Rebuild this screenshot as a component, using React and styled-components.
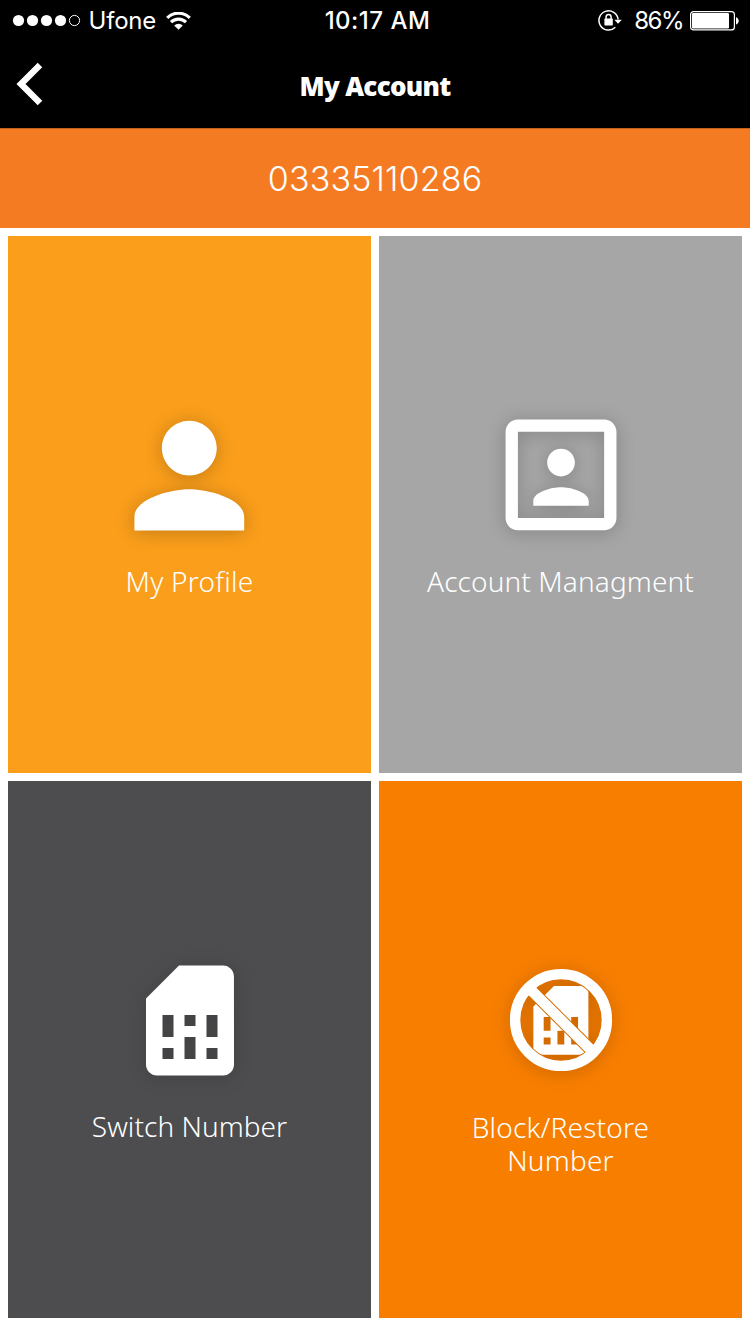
import React from "react";
import styled, { createGlobalStyle } from "styled-components";

const GlobalStyle = createGlobalStyle`
  *, *::before, *::after { box-sizing: border-box; }
  body { margin: 0; background: #fff; }
`;

const Screen = styled.main`
  width: 750px;
  height: 1334px;
  display: flex;
  flex-direction: column;
  background: #fff;
  color: #fff;
  overflow: hidden;
`;

const StatusBar = styled.div`
  height: 40px;
  flex: none;
  display: grid;
  grid-template-columns: 1fr auto 1fr;
  align-items: center;
  padding: 1px 10px 0 12px;
  background: #000;
  font-family: Inter, "Liberation Sans", sans-serif;
  font-size: 24px;
  line-height: 40px;
`;

const StatusGroup = styled.div`
  display: flex;
  align-items: center;
  justify-content: ${(p) => (p.$end ? "flex-end" : "flex-start")};
  height: 40px;
  svg { display: block; flex: none; }
`;

const StatusText = styled.span`
  font-weight: ${(p) => p.$weight || 400};
  letter-spacing: ${(p) => p.$tracking || 0}px;
  padding-left: ${(p) => p.$left || 0}px;
  padding-right: ${(p) => p.$right || 0}px;
  white-space: nowrap;
`;

const NavBar = styled.header`
  height: 88px;
  flex: none;
  display: grid;
  grid-template-columns: 60px 1fr 60px;
  align-items: start;
  background: #000;
`;

const BackButton = styled.button`
  border: 0;
  padding: 22px 0 0 15px;
  background: none;
  text-align: left;
  svg { display: block; }
`;

const Title = styled.h1`
  margin: 0;
  padding-top: 27px;
  text-align: center;
  font: 900 26px/38px "Noto Sans", sans-serif;
  letter-spacing: -0.7px;
`;

const NumberBanner = styled.div`
  height: 100px;
  flex: none;
  border-top: 1px solid #c4621b;
  background: #f57b22;
  text-align: center;
  font: 300 34px/99px Inter, "Liberation Sans", sans-serif;
  letter-spacing: 0.15px;
`;

const Grid = styled.section`
  flex: 1;
  display: grid;
  grid-template-columns: 1fr 1fr;
  grid-template-rows: 537px 537px;
  gap: 8px;
  padding: 8px;
`;

const Tile = styled.a`
  display: flex;
  flex-direction: column;
  align-items: center;
  padding-top: 173px;
  background: ${(p) => p.$color};
`;

const TileIcon = styled.svg`
  display: block;
  flex: none;
  width: 132px;
  height: 132px;
  overflow: visible;
  filter: drop-shadow(0 2px 9px rgba(0, 0, 0, ${(p) => p.$shade || 0.22}));
`;

const TileLabel = styled.span`
  margin-top: ${(p) => p.$top || 24}px;
  font: 300 28px/33px "Noto Sans", sans-serif;
  letter-spacing: ${(p) => p.$tracking || 0.12}px;
  text-align: center;
  white-space: pre-line;
`;

const SIM =
  "M19.99 4c0-1.1-.89-2-1.99-2h-8L4 8v12c0 1.1.9 2 2 2h12.01c1.1 0 1.99-.9 1.99-2l-.01-16zM9 19H7v-2h2v2zm8 0h-2v-2h2v2zm-8-4H7v-4h2v4zm4 4h-2v-4h2v4zm0-6h-2v-2h2v2zm4 2h-2v-4h2v4z";

function SignalDots() {
  return (
    <svg width="69" height="14" viewBox="0 0 69 14">
      {[6.5, 20.5, 34.5, 48.5].map((x) => (
        <circle key={x} cx={x} cy="6.5" r="5.6" fill="#fff" />
      ))}
      <circle cx="62.5" cy="6.5" r="5.1" fill="none" stroke="#fff" />
    </svg>
  );
}

function Wifi() {
  return (
    <svg width="25" height="18" viewBox="0 0 25 18" fill="none" stroke="#fff" strokeWidth="3.2">
      <path d="M1.2 5.8a16.2 16.2 0 0 1 22.6 0" />
      <path d="M5 10.1a10.7 10.7 0 0 1 15 0" />
      <path d="M12.5 17.8l-4.3-4.3a6 6 0 0 1 8.6 0z" fill="#fff" stroke="none" />
    </svg>
  );
}

function RotationLock() {
  return (
    <svg width="24" height="22" viewBox="0 0 24 22" fill="none" stroke="#fff">
      <path d="M17.3 17.3A9.6 9.6 0 1 1 20.1 9.5" strokeWidth="1.5" />
      <path d="M16.4 9.7h7.4L20 13.7z" fill="#fff" stroke="none" />
      <rect x="6.4" y="8.6" width="8.4" height="6.8" rx=".6" fill="#fff" stroke="none" />
      <path d="M8.1 9.5V7.1a2.5 2.7 0 0 1 5 0V9.5" strokeWidth="1.5" />
    </svg>
  );
}

function Battery() {
  return (
    <svg width="50" height="20" viewBox="0 0 50 20">
      <rect x=".6" y=".6" width="43.8" height="18.3" rx="3" fill="none" stroke="#fff" strokeWidth="1.2" />
      <rect x="2" y="2" width="37" height="15.5" rx="1.2" fill="#fff" />
      <path d="M46 6.2c3.6 1 3.6 6.2 0 7.2z" fill="#fff" />
    </svg>
  );
}

function BlockedSim() {
  return (
    <TileIcon viewBox="0 0 132 132" $shade={0.2}>
      <defs>
        <clipPath id="ring-inside">
          <circle cx="66" cy="66" r="39.8" />
        </clipPath>
        <mask id="slash-gap">
          <rect width="132" height="132" fill="#fff" />
          <path d="M28 28L104 104" stroke="#000" strokeWidth="12.6" />
        </mask>
      </defs>
      <g clipPath="url(#ring-inside)">
        <g mask="url(#slash-gap)">
          <path d={SIM} fill="#fff" transform="translate(24.6 25.1) scale(3.44)" />
        </g>
      </g>
      <circle cx="66" cy="66" r="45.9" fill="none" stroke="#fff" strokeWidth="10.4" />
      <path d="M34 34L98 98" stroke="#fff" strokeWidth="10.8" />
    </TileIcon>
  );
}

export default function App() {
  return (
    <Screen>
      <GlobalStyle />
      <StatusBar>
        <StatusGroup>
          <SignalDots />
          <StatusText $left={7.5} $right={9.8} $tracking={-0.2}>Ufone</StatusText>
          <Wifi />
        </StatusGroup>
        <StatusText $weight={500} $left={3} $tracking={0.5}>10:17 AM</StatusText>
        <StatusGroup $end>
          <RotationLock />
          <StatusText $left={12} $right={7} $tracking={-1.5}>86%</StatusText>
          <Battery />
        </StatusGroup>
      </StatusBar>
      <NavBar>
        <BackButton aria-label="Back">
          <svg width="30" height="44" viewBox="0 0 30 44">
            <path d="M25 3L6 22 25 41" fill="none" stroke="#fff" strokeWidth="6.4" />
          </svg>
        </BackButton>
        <Title>My Account</Title>
      </NavBar>
      <NumberBanner>03335110286</NumberBanner>
      <Grid>
        <Tile $color="#fa9e1b">
          <TileIcon viewBox="0 0 132 132" fill="#fff">
            <path
              transform="translate(-17 -15.8) scale(6.86)"
              d="M12 12c2.21 0 4-1.79 4-4s-1.79-4-4-4-4 1.79-4 4 1.79 4 4 4zm0 2c-2.67 0-8 1.34-8 4v2h16v-2c0-2.66-5.33-4-8-4z"
            />
          </TileIcon>
          <TileLabel $tracking={0.25}>My Profile</TileLabel>
        </Tile>
        <Tile $color="#a6a6a6">
          <TileIcon viewBox="0 0 132 132" fill="#fff">
            <path
              transform="translate(-7.9 -8) scale(6.16)"
              d="M12 12.25c1.24 0 2.25-1.01 2.25-2.25S13.24 7.75 12 7.75 9.75 8.76 9.75 10s1.01 2.25 2.25 2.25zm4.5 4c0-1.5-3-2.25-4.5-2.25s-4.5.75-4.5 2.25V17h9v-.75zM19 3H5c-1.1 0-2 .9-2 2v14c0 1.1.9 2 2 2h14c1.1 0 2-.9 2-2V5c0-1.1-.9-2-2-2zm0 16H5V5h14v14z"
            />
          </TileIcon>
          <TileLabel>Account Managment</TileLabel>
        </Tile>
        <Tile $color="#4d4d4f">
          <TileIcon viewBox="0 0 132 132" fill="#fff" $shade={0.16}>
            <path transform="translate(0 .6) scale(5.5)" d={SIM} />
          </TileIcon>
          <TileLabel $tracking={0.05}>Switch Number</TileLabel>
        </Tile>
        <Tile $color="#f87e00">
          <BlockedSim />
          <TileLabel $top={25} $tracking={0.2}>{"Block/Restore\nNumber"}</TileLabel>
        </Tile>
      </Grid>
    </Screen>
  );
}
